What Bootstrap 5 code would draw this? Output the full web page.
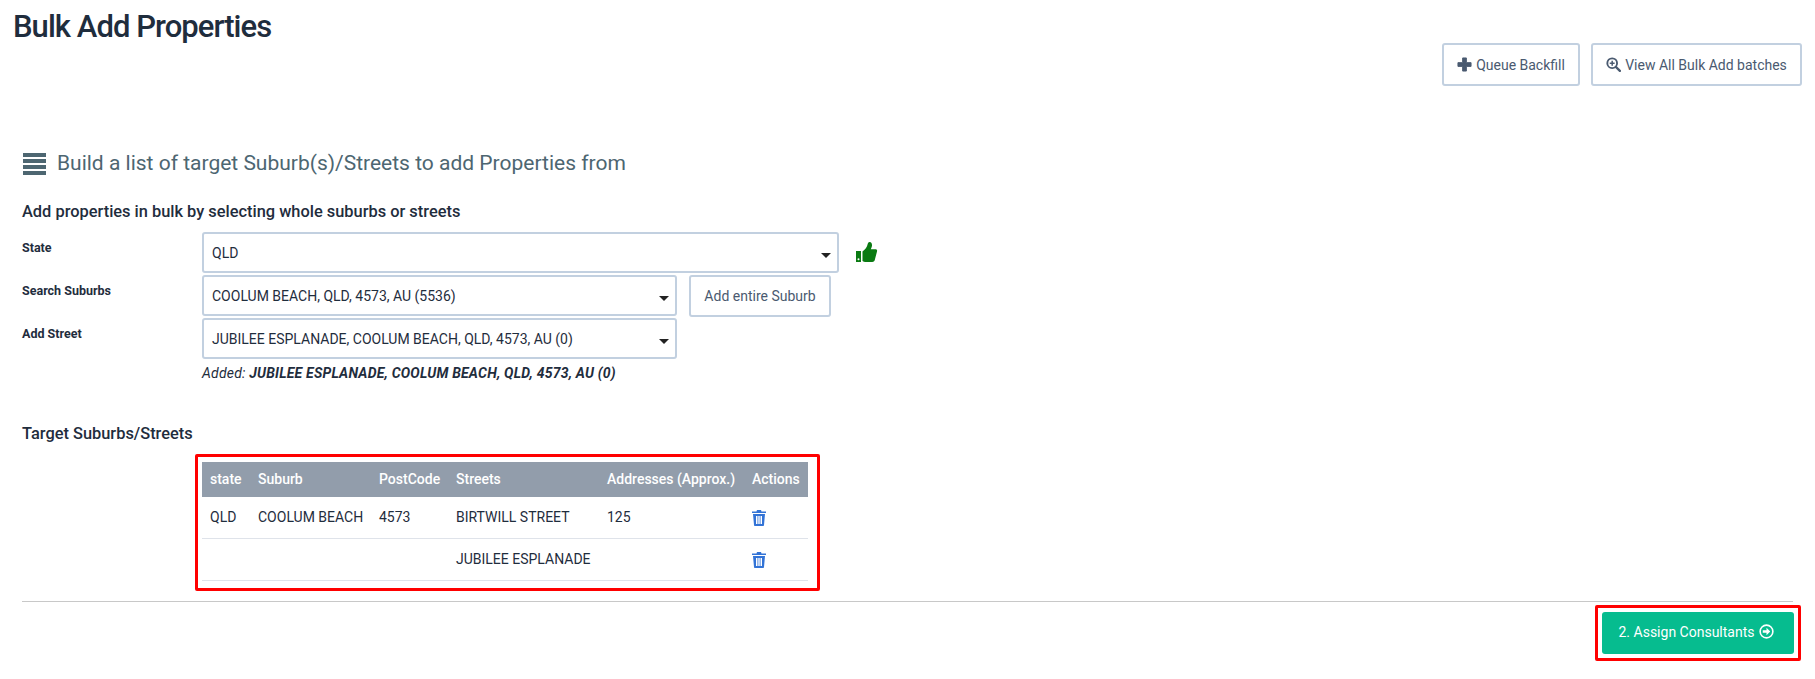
<!DOCTYPE html>
<html lang="en">
<head>
<meta charset="utf-8">
<title>Bulk Add Properties</title>
<link href="https://cdn.jsdelivr.net/npm/bootstrap@5.3.0/dist/css/bootstrap.min.css" rel="stylesheet">
<style>
body{font-family:Roboto,"Liberation Sans",sans-serif;color:#1f2d3d;font-size:14px;background:#fff;margin:0}
.page-wrap{padding:0 22px 0 22px;height:679px;overflow:hidden}
.page-title{font-size:31px;font-weight:500;color:#1f2d3d;margin:9px 0 0 -9px;line-height:36px;letter-spacing:-.95px}
.top-actions{gap:11px;margin:-2px -9px 0 0}
.ghost-btn{background:#fff;border:2px solid #c2d0e0;border-radius:3px;color:#4a5a70;font-size:14px;line-height:16px;padding:0;display:inline-flex;align-items:center;justify-content:center}
.ghost-btn:hover{background:#fff;color:#4a5a70;border-color:#c2d0e0}
.btn-queue{width:138px;height:43px}
.btn-view{width:211px;height:43px}
.section-head{margin:63px 0 0 1px;height:30px;color:#4d6671;font-size:21px;font-weight:400;gap:11px}
.sub-head{font-size:16.4px;font-weight:500;color:#1f2d3d;margin:0;line-height:20px}
.sub-first{margin-top:23px}
.form-rows{margin-top:10px}
.row-label{width:180px;font-size:12.5px;font-weight:700;color:#1f2d3d;padding-top:8px;line-height:16px;flex:none}
.pick{border:2px solid #c2d0e0;border-radius:3px;background:#fff;height:41px;padding:2px 8px 0;color:#1f2d3d;font-size:14px;position:relative;display:flex;align-items:center}
.pick::after{content:"";position:absolute;right:6px;top:19px;border:5px solid transparent;border-top-color:#222;border-bottom:0}
.pick-wide{width:637px}
.pick-mid{width:475px}
.form-line{margin-bottom:2px;height:41px}
.add-btn{width:142px;height:42px;margin-left:12px}
.thumb{margin-left:16px;margin-top:-1px}
.added-note{margin:6px 0 0 180px;font-size:14px;font-style:italic;line-height:16px;color:#1f2d3d;letter-spacing:.2px}
.added-note b{font-weight:700}
.target-head{margin-top:43px}
.target-frame{width:625px;margin:10px 0 0 173px;border:3px solid #f00;padding:5px 7px 7px 4px;border-radius:2px}
.prop-table{width:606px;border-collapse:collapse;font-size:14px;table-layout:fixed;margin:0}
.prop-table th{background:#929dab;color:#fff;font-weight:500;height:35px;padding:0 0 0 8px;border:0;vertical-align:middle;white-space:nowrap}
.prop-table td{height:42px;padding:0 0 0 8px;border:0;border-bottom:1px solid #dfe3ea;vertical-align:middle;color:#1f2d3d;white-space:nowrap;background:#fff}
.prop-table tbody tr:first-child td{height:41px}
.rule{margin:10px 0 0;border:0;border-top:1px solid #c8c8c8;opacity:1}
.go-frame{width:206px;height:56px;border:3px solid #f00;border-radius:2px;margin:3px -8px 0 0;padding:4px;display:flex}
.go-btn{background:#06bc8f;border:0;border-radius:3px;color:#fff;font-size:14px;width:100%;padding:0 4px 0 0;display:flex;align-items:center;justify-content:center;gap:4px}
.go-btn:hover{background:#06bc8f;color:#fff}
.go-icon{margin-top:-3px}
.col-a{width:48px}.col-b{width:121px}.col-c{width:77px}.col-d{width:151px}.col-e{width:145px}.col-f{width:64px}
</style>
</head>
<body>
<div class="page-wrap">
  <h1 class="page-title">Bulk Add Properties</h1>
  <div class="d-flex justify-content-end top-actions">
    <button type="button" class="btn ghost-btn btn-queue">
      <svg width="15" height="15" viewBox="0 0 16 16" class="me-1" aria-hidden="true"><path fill="#4a5a70" d="M6 1h4v5h5v4h-5v5H6v-5H1V6h5z" stroke="#4a5a70" stroke-linejoin="round"/></svg>Queue Backfill
    </button>
    <button type="button" class="btn ghost-btn btn-view">
      <svg width="15" height="15" viewBox="0 0 16 16" class="me-1" aria-hidden="true"><circle cx="6.600" cy="6.600" r="5.200" fill="none" stroke="#4a5a70" stroke-width="2"/><path d="M10.500 10.500L14.800 14.800" stroke="#4a5a70" stroke-width="2.400" stroke-linecap="round"/><path d="M4 6.600h5.200M6.600 4v5.200" stroke="#4a5a70" stroke-width="1.600"/></svg>View All Bulk Add batches
    </button>
  </div>

  <h2 class="section-head d-flex align-items-center">
    <svg width="23" height="22" viewBox="0 0 23 22" aria-hidden="true"><path fill="#4d6671" d="M0 0h23v4H0zM0 6h23v4H0zM0 12h23v4H0zM0 18h23v4H0z"/></svg>
    <span>Build a list of target Suburb(s)/Streets to add Properties from</span>
  </h2>
  <h3 class="sub-head sub-first">Add properties in bulk by selecting whole suburbs or streets</h3>

  <div class="form-rows">
    <div class="d-flex form-line">
      <div class="row-label">State</div>
      <div class="pick pick-wide">QLD</div>
      <svg class="thumb align-self-center" width="23" height="23" viewBox="0 0 23 23" aria-hidden="true"><path fill="#0a7a12" d="M1 10h5v11H1zM7.500 10.500c2.500-1.600 4.300-4 4.900-6.400.3-1.400.8-3.100 2.200-3.100 2.100 0 2.700 2.400 2.300 4.300-.2 1-.7 2-1.100 2.900h4.700c1.300 0 1.900 1.100 1.500 2.300l-2.300 8.800c-.4 1.200-1.200 1.700-2.400 1.700H11c-1.400 0-2.500-.5-3.500-1.100z"/><circle cx="3.500" cy="18.300" r="1" fill="#fff"/></svg>
    </div>
    <div class="d-flex form-line">
      <div class="row-label">Search Suburbs</div>
      <div class="pick pick-mid">COOLUM BEACH, QLD, 4573, AU (5536)</div>
      <button type="button" class="btn ghost-btn add-btn">Add entire Suburb</button>
    </div>
    <div class="d-flex form-line">
      <div class="row-label">Add Street</div>
      <div class="pick pick-mid">JUBILEE ESPLANADE, COOLUM BEACH, QLD, 4573, AU (0)</div>
    </div>
    <p class="added-note">Added: <b>JUBILEE ESPLANADE, COOLUM BEACH, QLD, 4573, AU (0)</b></p>
  </div>

  <h3 class="sub-head target-head">Target Suburbs/Streets</h3>
  <div class="target-frame">
    <table class="prop-table">
      <colgroup><col class="col-a"><col class="col-b"><col class="col-c"><col class="col-d"><col class="col-e"><col class="col-f"></colgroup>
      <thead><tr><th>state</th><th>Suburb</th><th>PostCode</th><th>Streets</th><th>Addresses (Approx.)</th><th>Actions</th></tr></thead>
      <tbody>
        <tr><td>QLD</td><td>COOLUM BEACH</td><td>4573</td><td>BIRTWILL STREET</td><td>125</td>
          <td><svg width="14" height="16" viewBox="0 0 14 16" aria-hidden="true"><path fill="#3273d6" d="M5 0h4l.5 1.500H14v1.500H0V1.500h4.500zM1 4h12l-1 11c0 .6-.5 1-1 1H3c-.5 0-1-.4-1-1zM4 6v8h1.500V6zM6.300 6v8h1.400V6zM8.500 6v8H10V6z" fill-rule="evenodd"/></svg></td></tr>
        <tr><td></td><td></td><td></td><td>JUBILEE ESPLANADE</td><td></td>
          <td><svg width="14" height="16" viewBox="0 0 14 16" aria-hidden="true"><path fill="#3273d6" d="M5 0h4l.5 1.500H14v1.500H0V1.500h4.500zM1 4h12l-1 11c0 .6-.5 1-1 1H3c-.5 0-1-.4-1-1zM4 6v8h1.500V6zM6.300 6v8h1.400V6zM8.500 6v8H10V6z" fill-rule="evenodd"/></svg></td></tr>
      </tbody>
    </table>
  </div>
  <hr class="rule">
  <div class="d-flex justify-content-end">
    <div class="go-frame">
      <button type="button" class="btn go-btn">2. Assign Consultants
        <svg class="go-icon" width="15" height="15" viewBox="0 0 16 16" aria-hidden="true"><circle cx="8" cy="8" r="6.800" fill="none" stroke="#fff" stroke-width="1.700"/><path fill="#fff" d="M4 6.700h4V4l4 4-4 4V9.300H4z"/></svg>
      </button>
    </div>
  </div>
</div>
<script src="https://cdn.jsdelivr.net/npm/bootstrap@5.3.0/dist/js/bootstrap.bundle.min.js"></script>
</body>
</html>
